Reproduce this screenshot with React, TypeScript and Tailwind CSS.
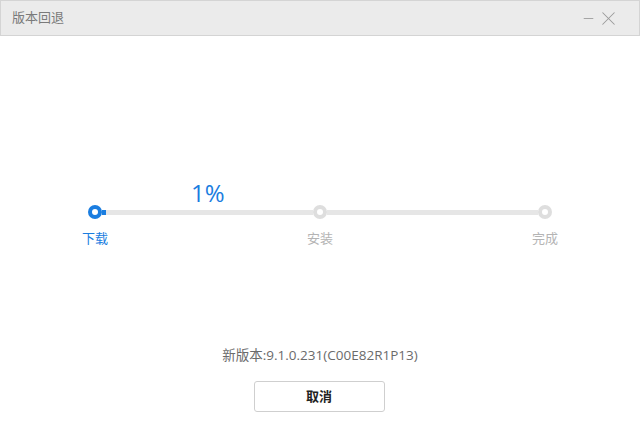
import { X, Minus } from "lucide-react";

const font = { fontFamily: '"Open Sans", "Noto Sans CJK SC", sans-serif' };

function Step({ label, active }: { label: string; active?: boolean }) {
  return (
    <div className="flex w-[14px] flex-col items-center">
      <div
        className={
          active
            ? "flex h-[14px] w-[14px] items-center justify-center rounded-full bg-[#1a7de0]"
            : "flex h-[14px] w-[14px] items-center justify-center rounded-full bg-[#dedede]"
        }
      >
        <div className="h-[6px] w-[6px] rounded-full bg-white" />
      </div>
      <div
        className={
          active
            ? "mt-[11px] whitespace-nowrap text-[13px] leading-[16px] text-[#1a7de0]"
            : "mt-[11px] whitespace-nowrap text-[13px] leading-[16px] text-[#b4b4b4]"
        }
      >
        {label}
      </div>
    </div>
  );
}

export default function App() {
  return (
    <div className="h-[441px] w-[640px] bg-white" style={font}>
      {/* Title bar */}
      <div className="flex h-[36px] items-center justify-between border border-[#d4d4d4] bg-[#ebebeb] pl-[11px] pr-[19px]">
        <span className="text-[13px] text-[#7a7a7a]">版本回退</span>
        <div className="flex items-center gap-[1px] text-[#9a9a9a]">
          <Minus size={15} strokeWidth={1.4} />
          <X size={23} strokeWidth={1.1} />
        </div>
      </div>

      {/* Progress */}
      <div className="ml-[88px] mt-[142px] w-[464px]">
        <div className="ml-[103px] w-[32px] text-center text-[24px] leading-[30px] text-[#1a7de0]">1%</div>
        <div className="mt-[-3px] flex items-start">
          <Step label="下载" active />
          <div className="mt-[5px] flex h-[5px] flex-1 bg-[#e6e6e6]">
            <div className="h-full w-[4px] bg-[#1a7de0]" />
          </div>
          <Step label="安装" />
          <div className="mt-[5px] h-[5px] flex-1 bg-[#e6e6e6]" />
          <Step label="完成" />
        </div>
      </div>

      {/* Version + button */}
      <div className="mt-[101px] flex flex-col items-center">
        <div className="text-[13.5px] leading-[16px] text-[#6b6b6b]">新版本:9.1.0.231(C00E82R1P13)</div>
        <button className="mt-[18px] h-[31px] w-[131px] -translate-x-px rounded-[3px] border border-[#cfcfcf] bg-white text-[13px] font-bold text-[#222]">
          取消
        </button>
      </div>
    </div>
  );
}
